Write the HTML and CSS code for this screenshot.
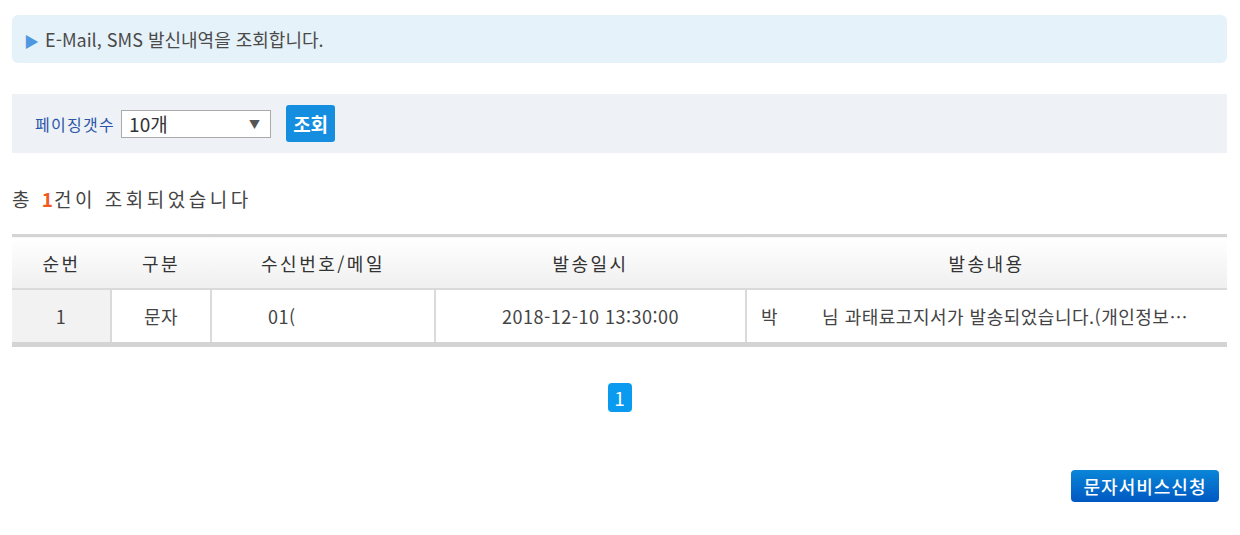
FILE: index.html
```html
<!DOCTYPE html>
<html lang="ko">
<head>
    <meta charset="UTF-8">
    <title>발신내역 조회</title>
    <link rel="stylesheet" href="styles.css">
</head>
<body>
<div class="wrap">
    <div class="info-box">
        <span class="tri">&#9654;</span> E-Mail, SMS 발신내역을 조회합니다.
    </div>

    <form class="search-bar">
        <label class="search-label" for="pageSize">페이징갯수</label>
        <div class="select-box">
            <span class="select-value">10개</span>
            <span class="select-arrow">&#9660;</span>
        </div>
        <button type="button" class="btn-search">조회</button>
    </form>

    <p class="result-count">총 <b>1</b>건이 조회되었습니다</p>

    <table class="list">
        <colgroup>
            <col style="width:99px">
            <col style="width:100px">
            <col style="width:224px">
            <col style="width:311px">
            <col>
        </colgroup>
        <tr>
            <th>순번</th>
            <th>구분</th>
            <th>수신번호/메일</th>
            <th>발송일시</th>
            <th>발송내용</th>
        </tr>
        <tr>
            <td class="num">1</td>
            <td>문자</td>
            <td class="phone">01(</td>
            <td>2018-12-10 13:30:00</td>
            <td class="content">박<span class="mask"></span>님 과태료고지서가 발송되었습니다.(개인정보…</td>
        </tr>
    </table>

    <div class="paging">
        <a class="page on">1</a>
    </div>

    <div class="bottom">
        <button type="button" class="btn-apply">문자서비스신청</button>
    </div>
</div>
</body>
</html>
```

FILE: styles.css
```css
body {
    margin: 0;
    font-family: "Noto Sans CJK KR", "Noto Sans", sans-serif;
    color: #444;
    background: #fff;
}
.wrap {
    padding: 15px 13px 0 12px;
}
.info-box {
    height: 48px;
    line-height: 48px;
    padding-left: 12px;
    background-color: #e6f2f9;
    border-radius: 6px;
    font-size: 18px;
    color: #4a4a4a;
}
.info-box .tri {
    color: #4f97e0;
    font-size: 15px;
    margin-right: 1px;
}
.search-bar {
    display: flex;
    align-items: center;
    height: 59px;
    margin-top: 31px;
    padding-left: 23px;
    background-color: #eef1f6;
}
.search-label {
    font-size: 16px;
    letter-spacing: 1.3px;
    color: #2a55a8;
    margin-right: 6px;
}
.select-box {
    display: flex;
    align-items: center;
    justify-content: space-between;
    padding: 0 10px 0 7px;
    box-sizing: border-box;
    width: 150px;
    height: 28px;
    background: #fff;
    border: 1px solid #aaa;
}
.select-value {
    font-size: 19px;
    color: #333;
}
.select-arrow {
    font-size: 11px;
    color: #555;
}
.btn-search {
    margin-left: 15px;
    width: 49px;
    height: 37px;
    padding: 0;
    border: none;
    border-radius: 3px;
    background-color: #158ee0;
    color: #fff;
    font-family: inherit;
    font-size: 19px;
    font-weight: bold;
}
.result-count {
    margin: 32px 0 0;
    font-size: 19px;
    letter-spacing: 3.5px;
    color: #444;
    line-height: 28px;
}
.result-count b {
    color: #f05a1e;
    letter-spacing: 1px;
}
.list {
    width: 100%;
    margin-top: 21px;
    border-collapse: collapse;
    table-layout: fixed;
    border-top: 3px solid #d4d4d4;
    border-bottom: 5px solid #d4d4d4;
}
.list th {
    height: 51px;
    padding: 0;
    font-size: 18px;
    letter-spacing: 2.5px;
    font-weight: normal;
    color: #333;
    background: linear-gradient(#ffffff, #efefef);
    border-bottom: 2px solid #dadada;
}
.list td {
    height: 52px;
    padding: 0;
    text-align: center;
    font-size: 18px;
    letter-spacing: 0.5px;
    color: #444;
    border-left: 2px solid #dadada;
    white-space: nowrap;
    overflow: hidden;
}
.list td:first-child {
    border-left: none;
    background-color: #f2f2f2;
}
.list td.phone {
    text-align: left;
    padding-left: 56px;
}
.list td.content {
    text-align: left;
    padding-left: 14px;
}
.mask {
    display: inline-block;
    width: 44px;
}
.paging {
    display: flex;
    justify-content: center;
    margin-top: 36px;
}
.page {
    display: block;
    width: 24px;
    height: 29px;
    line-height: 29px;
    text-align: center;
    border-radius: 4px;
    background-color: #0a9af0;
    color: #fff;
    font-size: 19px;
}
.bottom {
    display: flex;
    justify-content: flex-end;
    margin-top: 58px;
    padding-right: 8px;
}
.btn-apply {
    width: 148px;
    height: 32px;
    padding: 0;
    border: none;
    border-radius: 4px;
    background: linear-gradient(#0a86d8, #0058c2);
    color: #fff;
    font-family: inherit;
    font-size: 18px;
    font-weight: 500;
    letter-spacing: 1px;
}
```
